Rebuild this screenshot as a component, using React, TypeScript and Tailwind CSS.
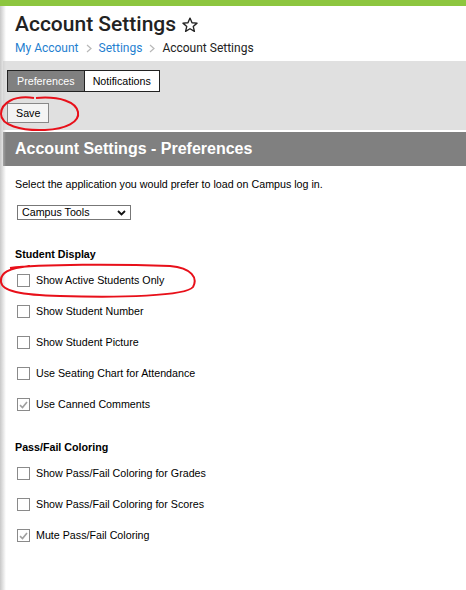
import React from "react";

const studentOptions = [
  { label: "Show Active Students Only", checked: false },
  { label: "Show Student Number", checked: false },
  { label: "Show Student Picture", checked: false },
  { label: "Use Seating Chart for Attendance", checked: false },
  { label: "Use Canned Comments", checked: true },
];

const passFailOptions = [
  { label: "Show Pass/Fail Coloring for Grades", checked: false },
  { label: "Show Pass/Fail Coloring for Scores", checked: false },
  { label: "Mute Pass/Fail Coloring", checked: true },
];

function Box({ checked }: { checked: boolean }) {
  return (
    <span className="flex h-[13px] w-[13px] shrink-0 items-center justify-center border border-[#8a8a8a] bg-white">
      {checked && (
        <svg width="9" height="8" viewBox="0 0 9 8">
          <path d="M1 4.2 L3.5 6.6 L8 1" fill="none" stroke="#a0a0a0" strokeWidth="1.6" />
        </svg>
      )}
    </span>
  );
}

function OptionRow({ label, checked }: { label: string; checked: boolean }) {
  return (
    <div className="flex h-[31px] items-center gap-[6px] pl-[17px] text-[10.7px] text-black">
      <Box checked={checked} />
      <span>{label}</span>
    </div>
  );
}

function Chevron() {
  return (
    <svg width="6" height="9" viewBox="0 0 6 9">
      <path d="M1 1 L5 4.5 L1 8" fill="none" stroke="#b8b8b8" strokeWidth="1.2" />
    </svg>
  );
}

export default function App() {
  return (
    <div
      className="relative h-[590px] w-[466px] overflow-hidden bg-white"
      style={{ fontFamily: '"Liberation Sans", Arial, sans-serif' }}
    >
      <div className="h-[6px] bg-[#8dc63f]" />
      <div className="pointer-events-none absolute bottom-0 left-0 top-[6px] w-[6px] bg-gradient-to-r from-[#c8c8c8] to-transparent" />

      <div className="px-[15px] pt-[4px]" style={{ fontFamily: "Roboto, sans-serif" }}>
        <div className="flex items-center gap-[5px]">
          <h1 className="text-[21px] font-medium leading-[28px] text-[#222]">Account Settings</h1>
          <svg width="18" height="18" viewBox="0 0 24 24" className="mt-[1px]">
            <path
              d="M12 2.8 L14.7 9 L21.4 9.5 L16.3 13.9 L17.9 20.5 L12 17 L6.1 20.5 L7.7 13.9 L2.6 9.5 L9.3 9 Z"
              fill="none"
              stroke="#222"
              strokeWidth="1.8"
              strokeLinejoin="round"
            />
          </svg>
        </div>
        <div className="mt-[2px] flex items-center gap-[7px] text-[12px] leading-[16px]">
          <span className="text-[#1f7fd0]">My Account</span>
          <Chevron />
          <span className="text-[#1f7fd0]">Settings</span>
          <Chevron />
          <span className="text-[#222]">Account Settings</span>
        </div>
      </div>

      <div className="mt-[5px] ml-[3px] bg-[#e0e0e0] pb-[7px] pl-[4px] pt-[9px]">
        <div className="flex text-[10.7px]">
          <span className="flex h-[22px] items-center border border-[#222] bg-[#808080] px-[9px] text-white">
            Preferences
          </span>
          <span className="flex h-[22px] items-center border border-l-0 border-[#222] bg-white px-[8px] text-black">
            Notifications
          </span>
        </div>
        <button className="mt-[11px] flex h-[20px] items-center border border-[#888] bg-[#f4f4f4] px-[8px] text-[10.7px] text-black">
          Save
        </button>
      </div>

      <div className="ml-[3px] mt-[2px] flex h-[34px] items-center bg-[#808080] pl-[12px] text-[16px] font-bold text-white">
        Account Settings - Preferences
      </div>

      <div className="pl-[15px] pt-[11px] text-[10.7px] text-black">
        <p className="leading-[14px]">Select the application you would prefer to load on Campus log in.</p>
        <div className="ml-[2px] mt-[14px] flex h-[15px] w-[114px] items-center justify-between border border-[#777] bg-white pl-[4px] pr-[4px]">
          <span>Campus Tools</span>
          <svg width="9" height="6" viewBox="0 0 9 6">
            <path d="M1 1 L4.5 4.5 L8 1" fill="none" stroke="#111" strokeWidth="1.8" />
          </svg>
        </div>
        <h2 className="mt-[27px] font-bold leading-[14px]">Student Display</h2>
      </div>
      <div className="mt-[4px]">
        {studentOptions.map((o) => (
          <OptionRow key={o.label} label={o.label} checked={o.checked} />
        ))}
      </div>
      <h2 className="mt-[20px] pl-[15px] text-[10.7px] font-bold leading-[14px] text-black">Pass/Fail Coloring</h2>
      <div className="mt-[4px]">
        {passFailOptions.map((o) => (
          <OptionRow key={o.label} label={o.label} checked={o.checked} />
        ))}
      </div>

      <svg className="pointer-events-none absolute left-0 top-0" width="466" height="590">
        <path
          d="M34 98 C14 95 1 103 1 114 C1 125 20 131 45 130 C66 129 80 122 78 112 C76 102 60 96 36 98"
          fill="none"
          stroke="#e8101a"
          strokeWidth="2"
        />
        <path
          d="M10 268 C40 264 120 264 170 266 C192 268 198 278 193 287 C186 296 120 298 60 296 C20 295 2 291 1 282 C0 273 8 268 30 266"
          fill="none"
          stroke="#e8101a"
          strokeWidth="2"
        />
      </svg>
    </div>
  );
}
